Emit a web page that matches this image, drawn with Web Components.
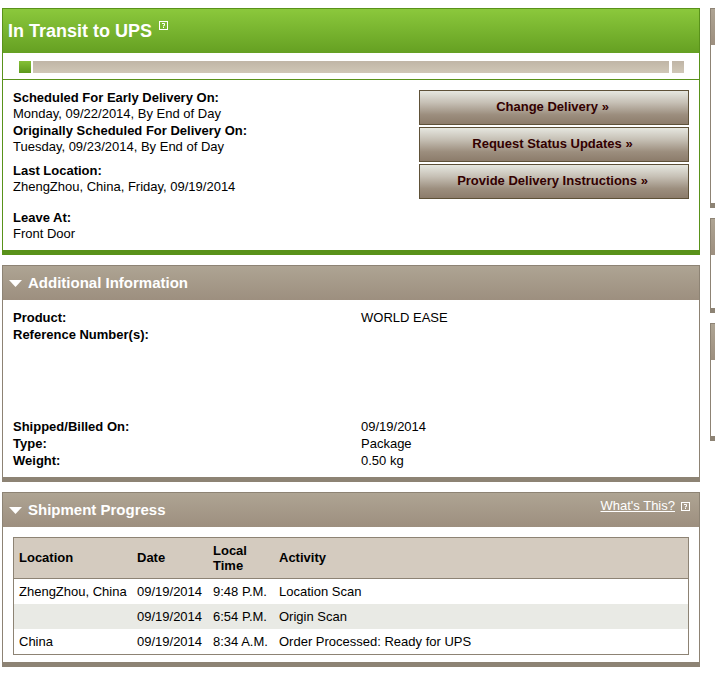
<!DOCTYPE html>
<html lang="en">
<head>
<meta charset="utf-8">
<title>Tracking Detail</title>
<style>
html, body {
	margin: 0;
	height: 100%;
	overflow: hidden;
	background: #fff;
}
body {
	font: 13px/16px "Liberation Sans", Arial, sans-serif;
	color: #000;
}
</style>
</head>
<body>
<tracking-page></tracking-page>
<script>
class HelpIcon extends HTMLElement {
	constructor() {
		super();
		this.attachShadow({mode: 'open'}).innerHTML = `
<style>
:host { display: inline-block; width: 9px; height: 9px; }
svg { display: block; }
</style>
<svg width="9" height="9" viewBox="0 0 9 9" fill="none" stroke="#fff">
	<rect x=".5" y=".5" width="8" height="8"/>
	<path d="M3 2.5h2.5v2h-1v1M4 6.5h1"/>
</svg>
`;
	}
}
customElements.define('help-icon', HelpIcon);

class InfoPanel extends HTMLElement {
	constructor() {
		super();
		this.attachShadow({mode: 'open'}).innerHTML = `
<style>
:host {
	display: flex;
	flex-direction: column;
	box-sizing: border-box;
	border: 1px solid #8d8374;
	border-bottom-width: 5px;
	background: #fff;
}
header {
	display: flex;
	flex: none;
	box-sizing: border-box;
	height: var(--head, 34px);
	padding: 0 9px 0 6px;
	background: linear-gradient(#aea493, #9d8f7f);
	color: #fff;
}
h2 {
	display: flex;
	align-items: center;
	flex: 1;
	margin: 0;
	font-size: 15px;
	line-height: 18px;
}
svg { margin-right: 6px; }
:host([plain]) { border-right: 0; }
:host([plain]) header { padding: 0; }
:host([plain]) svg { display: none; }
:host([green]) { border-color: #59921a; }
:host([green]) header {
	background: linear-gradient(#8bc83c, #65a022);
	padding-left: 5px;
}
:host([green]) h2 { font-size: 18px; }
:host([green]) svg { display: none; }
</style>
<header>
	<h2><svg width="13" height="7" viewBox="0 0 13 7"><path d="M0 0h13L6.5 7z" fill="#fff"/></svg><slot name="title"></slot></h2>
	<slot name="extra"></slot>
</header>
<slot></slot>
`;
	}
}
customElements.define('info-panel', InfoPanel);

class ProgressTrack extends HTMLElement {
	constructor() {
		super();
		this.attachShadow({mode: 'open'}).innerHTML = `
<style>
:host {
	display: flex;
	height: 12px;
	padding: 8px 15px 6px 16px;
	border-bottom: 1px solid #59921a;
}
i { background: linear-gradient(#c0b5a6, #d0c7b7); }
.start { width: 12px; margin-right: 2px; background: linear-gradient(#85c037, #5c981c); }
.line { flex: 1; }
.end { width: 12px; margin-left: 3px; }
</style>
<i class="start"></i><i class="line"></i><i class="end"></i>
`;
	}
}
customElements.define('progress-track', ProgressTrack);

class ActionButton extends HTMLElement {
	constructor() {
		super();
		this.attachShadow({mode: 'open'}).innerHTML = `
<style>
:host { display: block; }
button {
	display: block;
	box-sizing: border-box;
	width: 100%;
	height: 35px;
	padding: 0 3px 2px 0;
	border: 1px solid #5e5138;
	background: linear-gradient(#e6e7e0, #c6c0b5 35%, #9c8e7e 72%, #8c7c6b);
	color: #330000;
	font: bold 13px/16px "Liberation Sans", Arial, sans-serif;
}
</style>
<button><slot></slot> »</button>
`;
	}
}
customElements.define('action-button', ActionButton);

class LabelValue extends HTMLElement {
	constructor() {
		super();
		this.attachShadow({mode: 'open'}).innerHTML = `
<style>
:host { display: block; }
:host([row]) { display: grid; grid-template-columns: 348px 1fr; line-height: 17px; }
b { display: block; }
</style>
<b>${this.getAttribute('label')}:</b>
<slot></slot>
`;
	}
}
customElements.define('label-value', LabelValue);

class ActivityTable extends HTMLElement {
	constructor() {
		super();
		const rows = [
			['ZhengZhou, China', '09/19/2014', '9:48 P.M.', 'Location Scan'],
			['', '09/19/2014', '6:54 P.M.', 'Origin Scan'],
			['China', '09/19/2014', '8:34 A.M.', 'Order Processed: Ready for UPS']
		];
		this.attachShadow({mode: 'open'}).innerHTML = `
<style>
:host { display: block; border: 1px solid #8d8374; }
table {
	width: 100%;
	border-collapse: separate;
	border-spacing: 0;
	table-layout: fixed;
}
th, td {
	box-sizing: border-box;
	height: 25px;
	padding: 0 0 0 5px;
	text-align: left;
	white-space: nowrap;
}
th {
	height: 41px;
	padding-bottom: 1px;
	border-bottom: 1px solid #8d8374;
	background: #d4cbbf;
	line-height: 15px;
}
tr:nth-child(even) td { background: #e9eae5; }
</style>
<table>
	<colgroup><col style="width:118px"><col style="width:76px"><col style="width:66px"><col></colgroup>
	<thead><tr><th>Location</th><th>Date</th><th>Local<br>Time</th><th>Activity</th></tr></thead>
	<tbody>${rows.map(r => `<tr>${r.map(c => `<td>${c}</td>`).join('')}</tr>`).join('')}</tbody>
</table>
`;
	}
}
customElements.define('activity-table', ActivityTable);

class TrackingPage extends HTMLElement {
	constructor() {
		super();
		this.attachShadow({mode: 'open'}).innerHTML = `
<style>
:host {
	display: grid;
	grid-template-columns: 698px minmax(0, 1fr);
	gap: 10px;
	align-items: start;
	padding: 8px 0 0 2px;
}
main, aside { display: grid; gap: 10px; }
.status { --head: 44px; height: 247px; }
.status help-icon { margin: -11px 0 0 7px; }
.summary {
	display: grid;
	grid-template-columns: 1fr 270px;
	padding: 10px 10px 0;
}
.summary label-value { margin-bottom: 1px; }
.summary .early { margin-bottom: 8px; }
.summary .last { margin-bottom: 15px; }
.actions { display: grid; gap: 2px; align-content: start; }
.additional { height: 217px; }
.details { padding: 9px 10px 0; }
.reference { height: 92px; }
.progress { height: 175px; }
.what { display: flex; align-items: flex-start; padding-top: 5px; }
.what a { color: #fff; text-decoration: underline; }
.what help-icon { margin: 4px 0 0 6px; }
activity-table { margin: 10px 10px 0; }
aside info-panel { --head: 36px; }
</style>
<main>
	<info-panel class="status" green>
		<span slot="title">In Transit to UPS</span>
		<help-icon slot="title"></help-icon>
		<progress-track></progress-track>
		<div class="summary">
			<div>
				<label-value label="Scheduled For Early Delivery On">Monday, 09/22/2014, By End of Day</label-value>
				<label-value class="early" label="Originally Scheduled For Delivery On">Tuesday, 09/23/2014, By End of Day</label-value>
				<label-value class="last" label="Last Location">ZhengZhou, China, Friday, 09/19/2014</label-value>
				<label-value label="Leave At">Front Door</label-value>
			</div>
			<div class="actions">
				<action-button>Change Delivery</action-button>
				<action-button>Request Status Updates</action-button>
				<action-button>Provide Delivery Instructions</action-button>
			</div>
		</div>
	</info-panel>
	<info-panel class="additional">
		<span slot="title">Additional Information</span>
		<div class="details">
			<label-value row label="Product">WORLD EASE</label-value>
			<label-value row class="reference" label="Reference Number(s)"></label-value>
			<label-value row label="Shipped/Billed On">09/19/2014</label-value>
			<label-value row label="Type">Package</label-value>
			<label-value row label="Weight">0.50 kg</label-value>
		</div>
	</info-panel>
	<info-panel class="progress">
		<span slot="title">Shipment Progress</span>
		<div class="what" slot="extra"><a>What's This?</a><help-icon></help-icon></div>
		<activity-table></activity-table>
	</info-panel>
</main>
<aside>
	<info-panel plain style="height:200px"></info-panel>
	<info-panel plain style="height:95px"></info-panel>
	<info-panel plain style="height:118px"></info-panel>
</aside>
`;
	}
}
customElements.define('tracking-page', TrackingPage);
</script>
</body>
</html>
